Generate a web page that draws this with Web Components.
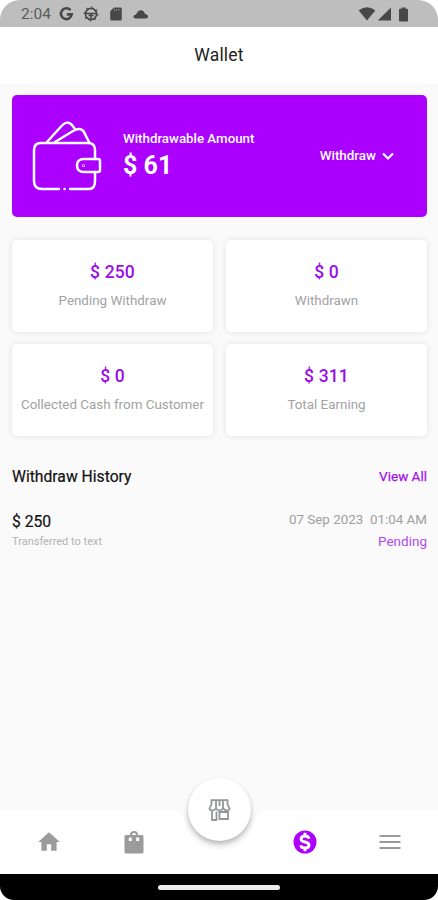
<!DOCTYPE html>
<html lang="en">
<head>
<meta charset="utf-8">
<title>Wallet</title>
<style>
html,body{margin:0;background:#fff}
body{font-family:Roboto,"Liberation Sans",sans-serif}
</style>
</head>
<body>
<wallet-app></wallet-app>
<script>
const define = (name, html) => {
  const t = document.createElement('template');
  t.innerHTML = html;
  customElements.define(name, class extends HTMLElement {
    constructor() {
      super();
      this.attachShadow({mode: 'open'}).append(t.content.cloneNode(true));
    }
  });
};

define('status-bar', `
<style>
:host{display:flex;height:27px;box-sizing:border-box;background:#bebebe;padding:0 30px 0 21px;justify-content:space-between;align-items:center;color:#484848}
.l,.r{display:flex;align-items:center;padding-top:1px}
time{font-size:15.5px;line-height:18px;width:31px;margin-right:7px;color:#5c5c5c;white-space:nowrap}
svg{display:block;fill:currentColor}
</style>
<div class="l"><time>2:04</time>
<svg width="15" height="16" viewBox="0 0 15 16"><path d="M11.500 4.200A5.400 5.400 0 1 0 12.700 8.400H7.800" fill="none" stroke="currentColor" stroke-width="2.600"/></svg>
<svg style="margin-left:9px" width="16" height="16" viewBox="0 0 16 16"><g fill="none" stroke="currentColor"><circle cx="8" cy="8" r="5.600" stroke-width="1.700"/><path d="M2 7.500H14M8 8v6M5.500 9.500h5" stroke-width="1.500"/><circle cx="8" cy="8" r="6.900" stroke-width="1.100" stroke-dasharray="1.600 3.820"/></g></svg>
<svg style="margin-left:11px" width="12" height="14" viewBox="0 0 12 14"><path fill-rule="evenodd" d="M4 .5h6.500a1.300 1.300 0 0 1 1.300 1.300v10.400a1.300 1.300 0 0 1-1.300 1.300h-9A1.300 1.300 0 0 1 .2 12.200V4.300zM4.200 2.300v1.300h.8v-1.300zM6.400 2.300v1.300h.8v-1.300zM8.600 2.300v1.300h.8v-1.300z"/></svg>
<svg style="margin-left:11px" width="16" height="11" viewBox="0 0 16 11"><path d="M2.500 9.500Q.5 9.500.5 7.800T3 5.500Q5 1.200 8 1.200T12 5Q15 5.500 15 7.500T13 9.500z"/></svg>
</div>
<div class="r">
<svg width="18" height="14" viewBox="0 0 18 14"><path d="M.7 3.400Q9-3 17.300 3.400L9 13.500z"/></svg>
<svg style="margin-left:1px" width="15" height="14" viewBox="0 0 15 14"><path d="M14 .5v13H.8z"/></svg>
<svg style="margin-left:7px" width="9" height="15" viewBox="0 0 9 15"><path d="M2.500 .5h4v1.200H8q1 0 1 1V13.500q0 1-1 1H1q-1 0-1-1V2.700q0-1 1-1h1.500z"/></svg>
</div>`);

define('app-header', `
<style>
:host{display:flex;height:57px;box-sizing:border-box;padding-bottom:1px;align-items:center;justify-content:center;background:#fff;font-size:17.500px;letter-spacing:.2px;color:#222}
</style><slot></slot>`);

define('balance-card', `
<style>
:host{display:flex;height:122px;box-sizing:border-box;border-radius:5px;background:#ac00ff;color:#fff;align-items:center;padding:0 32px 0 20px}
.t{margin:-1px 0 0 21px;flex:1}
.c{font-size:13.300px;line-height:18px;font-weight:500;white-space:nowrap}
.a{font-size:25px;line-height:32px;font-weight:700;margin-top:2px}
.w{display:flex;align-items:center;font-size:13.400px;font-weight:500;gap:5px;margin-top:-1px}
svg{display:block;fill:none;stroke:#fff}
</style>
<svg width="70" height="70" viewBox="0 0 70 70" stroke-width="2.500" stroke-linecap="round"><path d="M63 38V29Q63 22 56 22H9Q2 22 2 29V60Q2 68 10 68H27M38 68H57Q63 68 63 60V51"/><path d="M63 38H52Q45 38 45 44.500T52 51H66Q68 51 68 49V40Q68 38 66 38z"/><path d="M15 21L30 4.500Q35-1 40 4L43 8M23 21L41 10Q50 5 53 13L57 21"/><circle cx="51.500" cy="44.500" r=".3"/><path d="M32.500 68h.1"/></svg>
<div class="t"><div class="c"><slot name="label"></slot></div><div class="a"><slot></slot></div></div>
<div class="w"><slot name="action"></slot><svg width="14" height="10" viewBox="0 0 14 10" stroke-width="2.200"><path d="M2 2.500l5 5 5-5"/></svg></div>`);

define('stat-card', `
<style>
:host{display:flex;flex-direction:column;align-items:center;height:92px;box-sizing:border-box;padding-top:21px;border-radius:5px;background:#fff;box-shadow:0 0 5px 1px #e9e9e9;white-space:nowrap}
.v{font-size:17.500px;font-weight:500;letter-spacing:.15px;line-height:22px;color:#9d0be9}
.k{font-size:13.400px;line-height:18px;margin-top:9px;color:#a2a2a2}
</style><div class="v"><slot></slot></div><div class="k"><slot name="label"></slot></div>`);

define('history-list', `
<style>
:host{display:block}
.row{display:flex;justify-content:space-between;white-space:nowrap}
.h{font-size:15.700px;line-height:20px;color:#111;-webkit-text-stroke:.2px #111}
.all{font-size:13.500px;line-height:20px;color:#a512ee;-webkit-text-stroke:.25px #a512ee;margin-top:-1px}
.i{margin-top:24px}
.amt{font-size:15.700px;line-height:22px;color:#111;-webkit-text-stroke:.2px #111}
.s{font-size:11px;line-height:16px;color:#b3b3b3;margin-top:1px}
.r{text-align:right;margin-top:-1px}
.d{font-size:13.400px;line-height:20px;color:#a0a0a0;white-space:pre}
.p{font-size:13.500px;line-height:20px;color:#b349f2;margin-top:1px}
</style>
<div class="row"><div class="h"><span>Withdraw History</span></div><div class="all"><span>View All</span></div></div>
<div class="row i"><div><div class="amt"><span>$ 250</span></div><div class="s"><span>Transferred to text</span></div></div>
<div class="r"><div class="d"><span>07 Sep 2023  01:04 AM</span></div><div class="p"><span>Pending</span></div></div></div>`);

define('bottom-nav', `
<style>
:host{display:block;position:relative;height:64px;color:#9b9b9b}
.bg{position:absolute;left:0;top:0;display:block}
.items{position:relative;height:64px;padding:0 5px 0 6px;display:grid;grid-template-columns:repeat(5,1fr);align-items:center;justify-items:center;box-sizing:border-box;padding-bottom:1px}
.items svg{display:block;fill:currentColor}
.fab{position:absolute;left:188px;top:-32px;width:63px;height:63px;border-radius:50%;background:#fff;box-shadow:0 3px 5px rgba(0,0,0,.28);display:flex;align-items:center;justify-content:center}
.fab svg{display:block}
</style>
<svg class="bg" width="438" height="64" viewBox="0 0 438 64"><path fill="#fff" d="M0 0H172Q182 0 184 10A36 36 0 0 0 255 10Q257 0 267 0H438V64H0z"/></svg>
<div class="items">
<svg width="26" height="26" viewBox="0 0 24 24"><path d="M10 20v-6h4v6h5v-8h3L12 3 2 12h3v8z"/></svg>
<svg width="20" height="24" viewBox="0 0 20 24"><path fill-rule="evenodd" d="M6 5a4 4 0 0 1 8 0h4q1.500 0 1.500 1.500V22q0 1.500-1.500 1.500H2Q.5 23.500.5 22V6.500Q.5 5 2 5zM8 5h4a2 2 0 0 0-4 0zM4.800 7.500v3.500h3V7.500zM12.200 7.500v3.500h3V7.500z"/></svg>
<span></span>
<svg style="color:#ac00ff" width="24" height="24" viewBox="0 0 24 24"><circle cx="12" cy="12" r="11.500"/><path d="M16 8.700Q15.500 6 12 6T8 8.900Q8 11 12 12T16 15.200Q16 18 12 18T8 15.200M12 2.800v3M12 18v3.200" fill="none" stroke="#fff" stroke-width="2.900"/></svg>
<svg width="22" height="16" viewBox="0 0 22 16"><path d="M.5 1h21v2H.5zM.5 7h21v2H.5zM.5 13h21v2H.5z"/></svg>
</div>
<div class="fab"><svg width="24" height="24" viewBox="0 0 24 24" fill="none" stroke="#949799" stroke-width="1.800"><path d="M3.500 2.200H19.500V6L21.500 10.500Q21 13 18.500 12.500T15 10Q14 12.500 11.500 12.500T8 10Q7 12.500 4.500 12.500T1.500 10.500L3.500 6zM8 2V10M11.500 2V8M15 2V10M4 12V22M8.500 22V13.500M3.200 22H9.300M11.500 14H20V21H11.500z"/></svg></div>`);

define('wallet-app', `
<style>
:host{display:flex;flex-direction:column;width:438px;height:900px;overflow:hidden;background:#fafafa;border-radius:20px 20px 14px 14px}
main{flex:1;padding:11px 11px 0 12px}
.grid{display:grid;grid-template-columns:201px 201px;gap:12px 13px;margin-top:23px}
history-list{margin-top:31px}
footer{height:26px;background:#000;display:flex;justify-content:center;align-items:center}
footer i{width:122px;height:5px;border-radius:3px;background:#ebebeb}
</style>
<status-bar></status-bar>
<app-header>Wallet</app-header>
<main>
<balance-card><span slot="label">Withdrawable Amount</span>$ 61<span slot="action">Withdraw</span></balance-card>
<div class="grid">
<stat-card>$ 250<span slot="label">Pending Withdraw</span></stat-card>
<stat-card>$ 0<span slot="label">Withdrawn</span></stat-card>
<stat-card>$ 0<span slot="label">Collected Cash from Customer</span></stat-card>
<stat-card>$ 311<span slot="label">Total Earning</span></stat-card>
</div>
<history-list></history-list>
</main>
<bottom-nav></bottom-nav>
<footer><i></i></footer>`);
</script>
</body>
</html>
